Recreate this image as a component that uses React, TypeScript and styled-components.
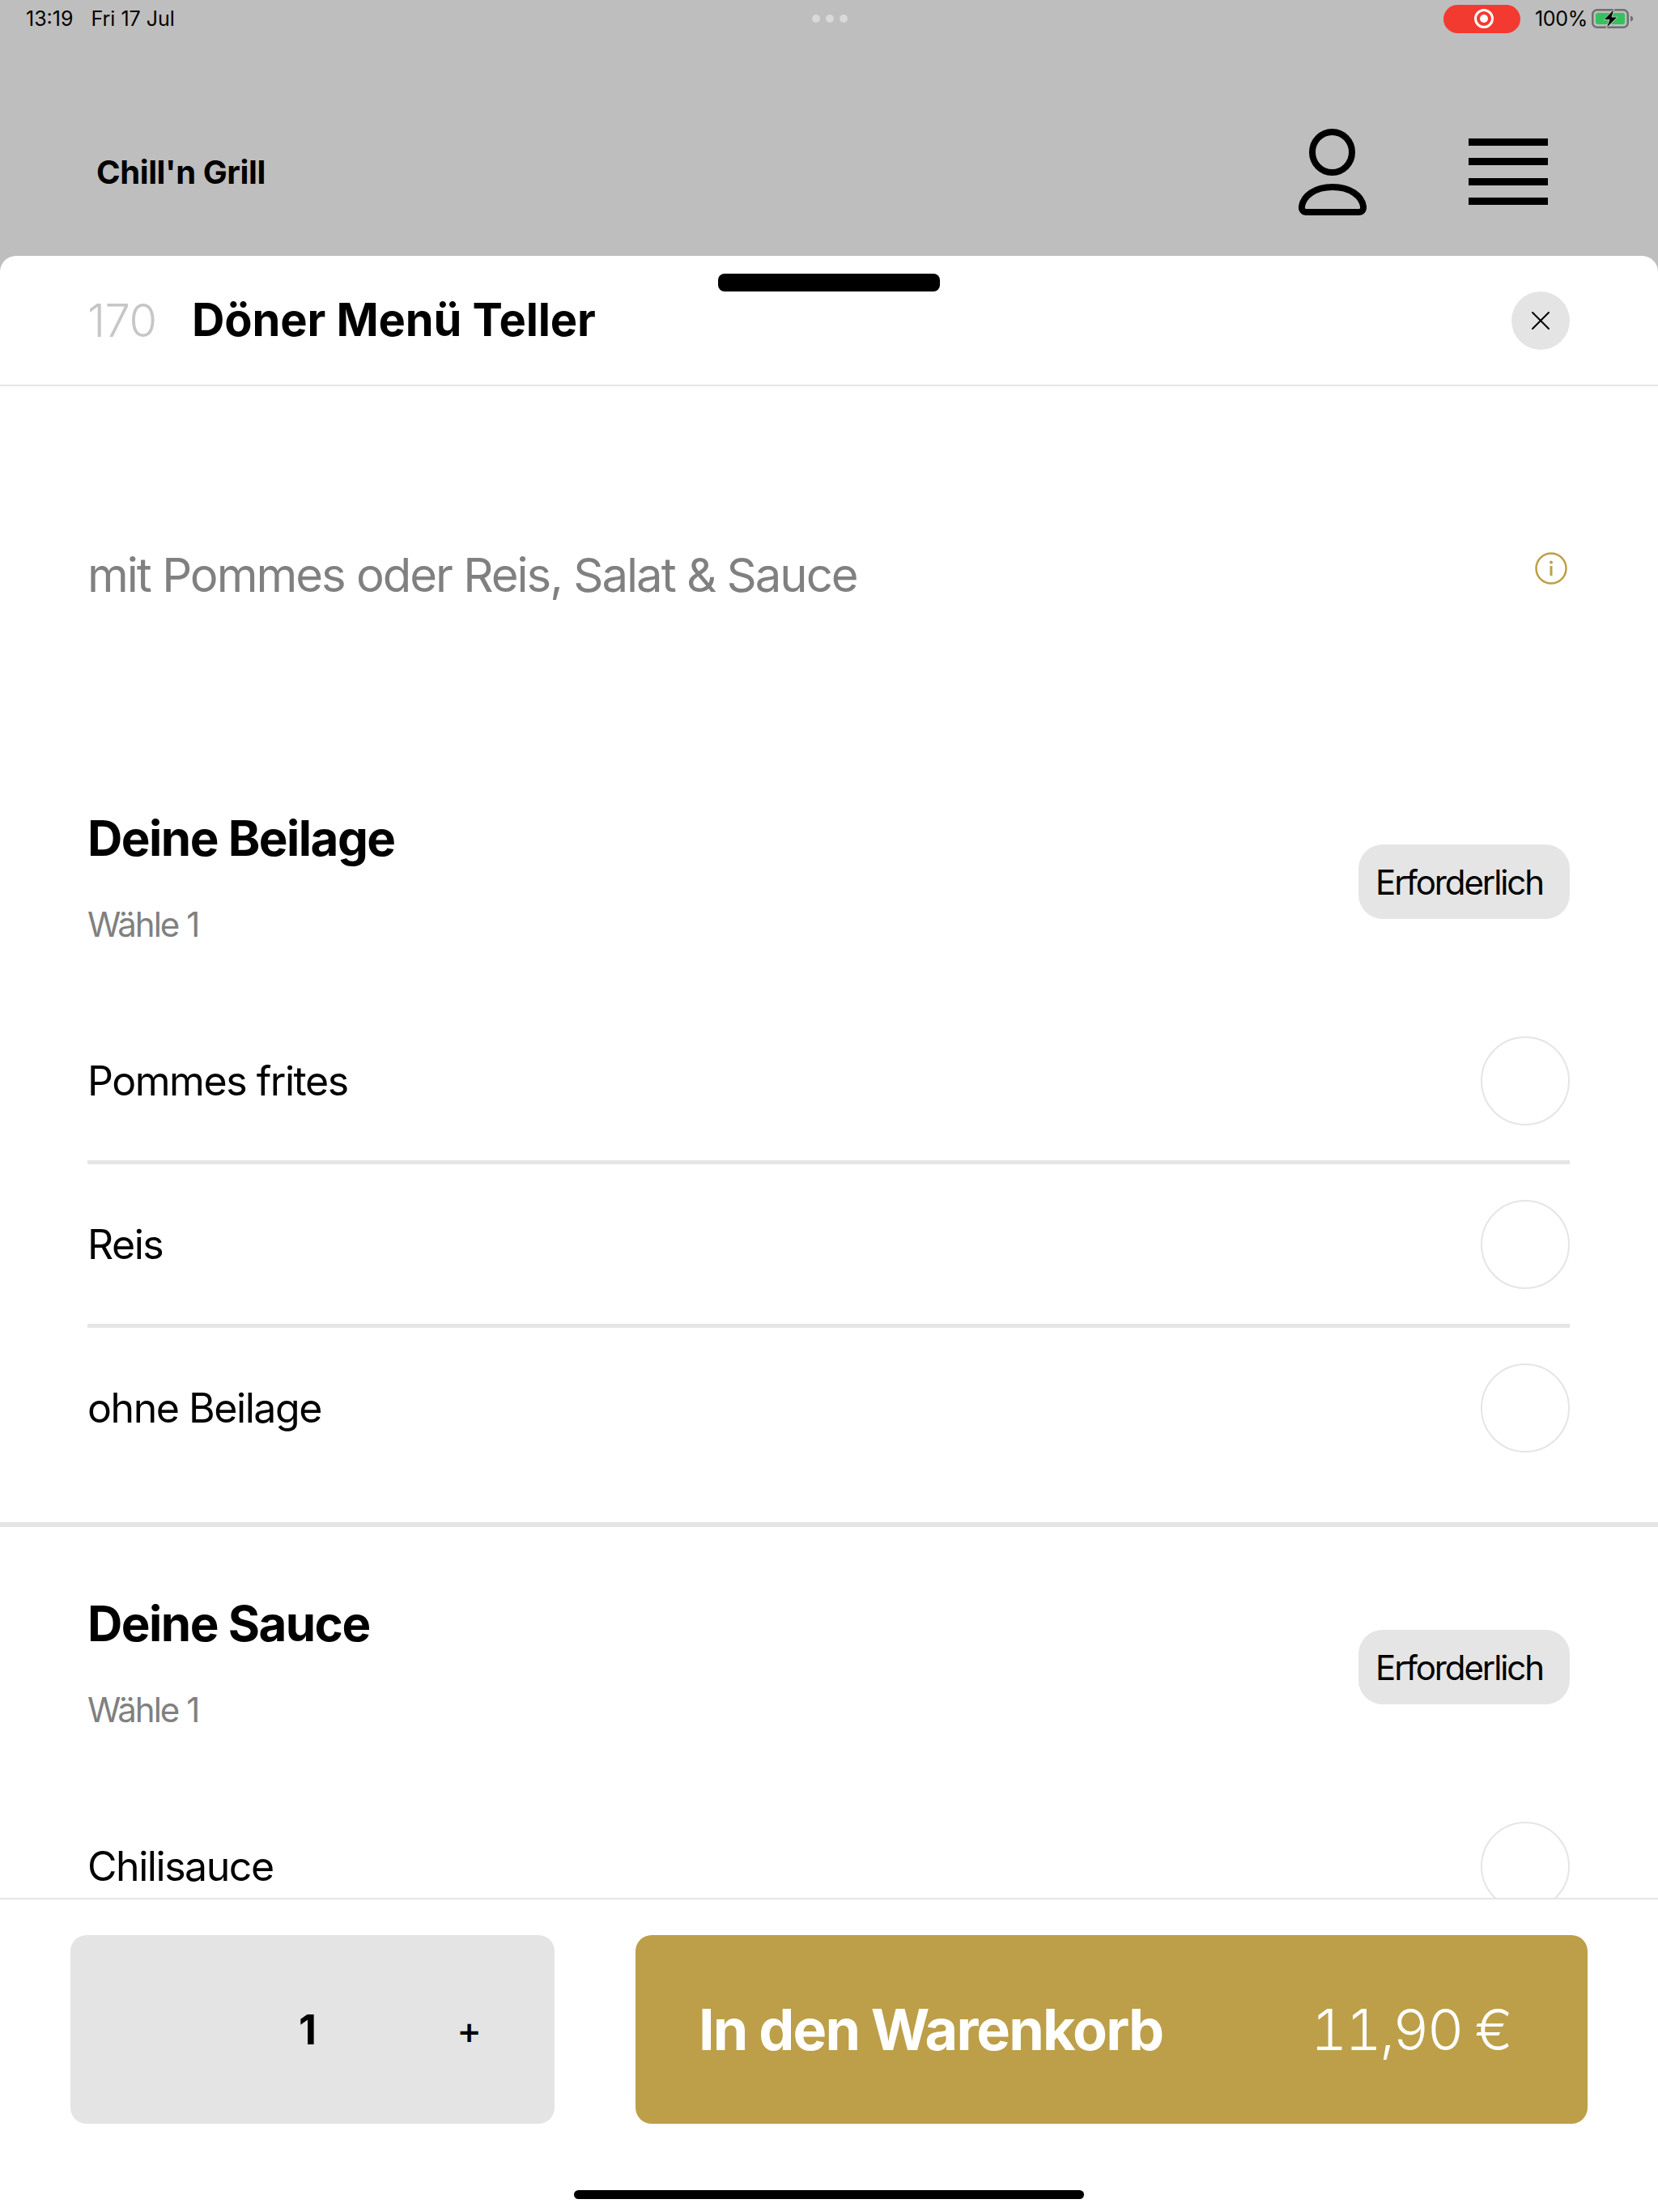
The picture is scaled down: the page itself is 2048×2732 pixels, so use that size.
import styled, { createGlobalStyle } from "styled-components";

const GlobalStyle = createGlobalStyle`
  html, body {
    margin: 0;
    padding: 0;
    background: #bebebe;
  }
  * {
    box-sizing: border-box;
  }
`;

const Page = styled.div`
  width: 2048px;
  height: 2732px;
  display: flex;
  flex-direction: column;
  overflow: hidden;
  background: #bebebe;
  color: #000;
  font-family: Inter, "Liberation Sans", sans-serif;
`;

const StatusBar = styled.div`
  height: 46px;
  padding: 0 30px 0 32px;
  display: grid;
  grid-template-columns: 1fr auto 1fr;
  align-items: center;
  font-size: 25px;
`;

const StatusLeft = styled.div`
  display: flex;
  gap: 22px;
`;

const Dots = styled.div`
  display: flex;
  gap: 7px;
  span {
    width: 10px;
    height: 10px;
    border-radius: 50%;
    background: #d9d9d9;
  }
`;

const StatusRight = styled.div`
  display: flex;
  justify-content: flex-end;
  align-items: center;
  letter-spacing: -0.3px;
  svg:last-child {
    margin-left: 5px;
  }
`;

const RecordPill = styled.div`
  width: 95px;
  height: 35px;
  margin-right: 18px;
  border-radius: 18px;
  background: #f33a30;
  display: flex;
  align-items: center;
  justify-content: center;
`;

const Nav = styled.header`
  height: 270px;
  padding: 62px 136px 0 119px;
  display: flex;
  align-items: center;
`;

const Brand = styled.div`
  flex: 1;
  font-size: 40px;
  font-weight: 700;
  letter-spacing: -0.4px;
`;

const NavIcons = styled.div`
  display: flex;
  align-items: center;
  gap: 126px;
`;

const Sheet = styled.div`
  position: relative;
  flex: 1;
  min-height: 0;
  display: flex;
  flex-direction: column;
  background: #fff;
  border-radius: 20px 20px 0 0;
  overflow: hidden;
`;

const Grabber = styled.div`
  position: absolute;
  top: 22px;
  left: 887px;
  width: 274px;
  height: 22px;
  border-radius: 8px;
  background: #000;
`;

const SheetHeader = styled.div`
  height: 161px;
  flex: none;
  padding: 0 109px 0 108px;
  display: flex;
  align-items: center;
  border-bottom: 2px solid #e5e5e5;
`;

const ItemNumber = styled.span`
  width: 129px;
  font-size: 56px;
  font-weight: 300;
  color: #c6c6c6;
  letter-spacing: -0.5px;
`;

const ItemTitle = styled.h1`
  flex: 1;
  margin: 0 0 2px;
  font-size: 56px;
  font-weight: 700;
  letter-spacing: -0.1px;
`;

const CloseButton = styled.button`
  width: 72px;
  height: 72px;
  padding: 0;
  border: 0;
  border-radius: 50%;
  background: #e4e4e4;
  display: flex;
  align-items: center;
  justify-content: center;
`;

const Scroller = styled.div`
  flex: 1;
  min-height: 0;
  overflow: hidden;
`;

const Description = styled.div`
  padding: 198px 107px 171px 108px;
  display: flex;
  align-items: center;
  justify-content: space-between;
  font-size: 58px;
  line-height: 70px;
  color: #808080;
  letter-spacing: -2px;
  svg {
    margin: 0 5px 16px 0;
  }
`;

const Section = styled.section<{ $divided?: boolean }>`
  padding: 85px 109px ${({ $divided }) => ($divided ? "38px" : "0")} 108px;
  border-bottom: ${({ $divided }) => ($divided ? "6px solid #e5e5e5" : "0")};
`;

const SectionHead = styled.div`
  display: flex;
  align-items: center;
  justify-content: space-between;
  margin-bottom: 69px;
`;

const SectionTitle = styled.h2`
  margin: -2px 0 46px;
  font-size: 60px;
  line-height: 72px;
  font-weight: 700;
  letter-spacing: -1.5px;
`;

const SectionHint = styled.div`
  font-size: 42px;
  line-height: 50px;
  color: #808080;
  letter-spacing: -2px;
`;

const RequiredBadge = styled.div`
  height: 92px;
  width: 261px;
  margin-top: 10px;
  padding-left: 21px;
  display: flex;
  align-items: center;
  border-radius: 30px;
  background: #e5e5e5;
  font-size: 42px;
  letter-spacing: -2.1px;
`;

const OptionRow = styled.div<{ $last?: boolean }>`
  height: 202px;
  padding-top: 0;
  display: flex;
  align-items: center;
  justify-content: space-between;
  font-size: 50px;
  letter-spacing: -1.45px;
  border-bottom: 5px solid ${({ $last }) => ($last ? "transparent" : "#e5e5e5")};
`;

const Radio = styled.span`
  width: 110px;
  height: 110px;
  border-radius: 50%;
  border: 2px solid #e5e5e5;
`;

const Footer = styled.footer`
  flex: none;
  height: 388px;
  padding: 44px 87px 0;
  background: #fff;
  border-top: 2px solid #e5e5e5;
`;

const Actions = styled.div`
  display: flex;
  gap: 100px;
  height: 233px;
`;

const Stepper = styled.div`
  width: 598px;
  padding-left: 199px;
  display: grid;
  grid-template-columns: 188px 1fr;
  align-items: center;
  justify-items: center;
  border-radius: 20px;
  background: #e4e4e4;
`;

const Quantity = styled.span`
  font-size: 51px;
  font-weight: 700;
`;

const Plus = styled.span`
  font-size: 46px;
  font-weight: 500;
`;

const CartButton = styled.button`
  flex: 1;
  padding: 0 95px 0 78px;
  border: 0;
  border-radius: 20px;
  background: #bc9f48;
  color: #fff;
  font-family: inherit;
  display: flex;
  align-items: center;
  justify-content: space-between;
`;

const CartLabel = styled.span`
  font-size: 70px;
  font-weight: 700;
  letter-spacing: -1.85px;
`;

const CartPrice = styled.span`
  font-size: 70px;
  font-weight: 300;
  font-variant-numeric: tabular-nums;
  letter-spacing: -2.7px;
`;

const HomeBar = styled.div`
  width: 630px;
  height: 11px;
  margin: 82px auto 0;
  border-radius: 6px;
  background: #000;
`;

const RecordIcon = () => (
  <svg width="26" height="26" viewBox="0 0 26 26">
    <circle cx="13" cy="13" r="10.5" fill="none" stroke="#fff" strokeWidth="3" />
    <circle cx="13" cy="13" r="5" fill="#fff" />
  </svg>
);

const BatteryIcon = () => (
  <svg width="52" height="24" viewBox="0 0 52 24">
    <rect x="1.25" y="1.25" width="43.5" height="21.5" rx="5.5" fill="none" stroke="#6f6f6f" strokeWidth="2.5" />
    <rect x="5" y="5" width="36" height="14" rx="2.5" fill="#34c25c" />
    <path d="M48 8.5c2 .4 3.2 1.800 3.2 3.5s-1.200 3.100-3.200 3.500z" fill="#6f6f6f" />
    <path d="M28 0 15 13.500h7L18 24l14-14h-7z" fill="#000" stroke="#bebebe" strokeWidth="1" />
  </svg>
);

const PersonIcon = () => (
  <svg width="84" height="107" viewBox="0 0 84 107" fill="none" stroke="#000" strokeWidth="8">
    <ellipse cx="41.5" cy="29" rx="24.5" ry="25" />
    <path d="M42 72c-22 0-36 11-38 24-.5 4 1.500 7 6 7h64c4.500 0 6.500-3 6-7-2-13-16-24-38-24z" />
  </svg>
);

const MenuIcon = () => (
  <svg width="98" height="82" viewBox="0 0 98 82" fill="#000">
    <rect y="0" width="98" height="9" />
    <rect y="24" width="98" height="9" />
    <rect y="49" width="98" height="9" />
    <rect y="73" width="98" height="9" />
  </svg>
);

const CloseIcon = () => (
  <svg width="24" height="24" viewBox="0 0 24 24" stroke="#000" strokeWidth="2" strokeLinecap="round">
    <path d="M2 2l20 20M22 2 2 22" />
  </svg>
);

const InfoIcon = () => (
  <svg width="40" height="40" viewBox="0 0 40 40">
    <circle cx="20" cy="20" r="18.500" fill="none" stroke="#bc9f48" strokeWidth="2.500" />
    <circle cx="20" cy="12.500" r="2" fill="#bc9f48" />
    <rect x="18.500" y="17" width="3" height="12" fill="#bc9f48" />
  </svg>
);

const sides = ["Pommes frites", "Reis", "ohne Beilage"];

export default function App() {
  return (
    <Page>
      <GlobalStyle />
      <StatusBar>
        <StatusLeft>
          <span>13:19</span>
          <span>Fri 17 Jul</span>
        </StatusLeft>
        <Dots>
          <span />
          <span />
          <span />
        </Dots>
        <StatusRight>
          <RecordPill>
            <RecordIcon />
          </RecordPill>
          <span>100%</span>
          <BatteryIcon />
        </StatusRight>
      </StatusBar>
      <Nav>
        <Brand>Chill'n Grill</Brand>
        <NavIcons>
          <PersonIcon />
          <MenuIcon />
        </NavIcons>
      </Nav>
      <Sheet>
        <Grabber />
        <SheetHeader>
          <ItemNumber>170</ItemNumber>
          <ItemTitle>Döner Menü Teller</ItemTitle>
          <CloseButton>
            <CloseIcon />
          </CloseButton>
        </SheetHeader>
        <Scroller>
          <Description>
            <span>mit Pommes oder Reis, Salat &amp; Sauce</span>
            <InfoIcon />
          </Description>
          <Section $divided>
            <SectionHead>
              <div>
                <SectionTitle>Deine Beilage</SectionTitle>
                <SectionHint>Wähle 1</SectionHint>
              </div>
              <RequiredBadge>Erforderlich</RequiredBadge>
            </SectionHead>
            {sides.map((side, i) => (
              <OptionRow key={side} $last={i === sides.length - 1}>
                {side}
                <Radio />
              </OptionRow>
            ))}
          </Section>
          <Section>
            <SectionHead>
              <div>
                <SectionTitle>Deine Sauce</SectionTitle>
                <SectionHint>Wähle 1</SectionHint>
              </div>
              <RequiredBadge>Erforderlich</RequiredBadge>
            </SectionHead>
            <OptionRow>
              Chilisauce
              <Radio />
            </OptionRow>
          </Section>
        </Scroller>
        <Footer>
          <Actions>
            <Stepper>
              <Quantity>1</Quantity>
              <Plus>+</Plus>
            </Stepper>
            <CartButton>
              <CartLabel>In den Warenkorb</CartLabel>
              <CartPrice>11,90 €</CartPrice>
            </CartButton>
          </Actions>
          <HomeBar />
        </Footer>
      </Sheet>
    </Page>
  );
}
